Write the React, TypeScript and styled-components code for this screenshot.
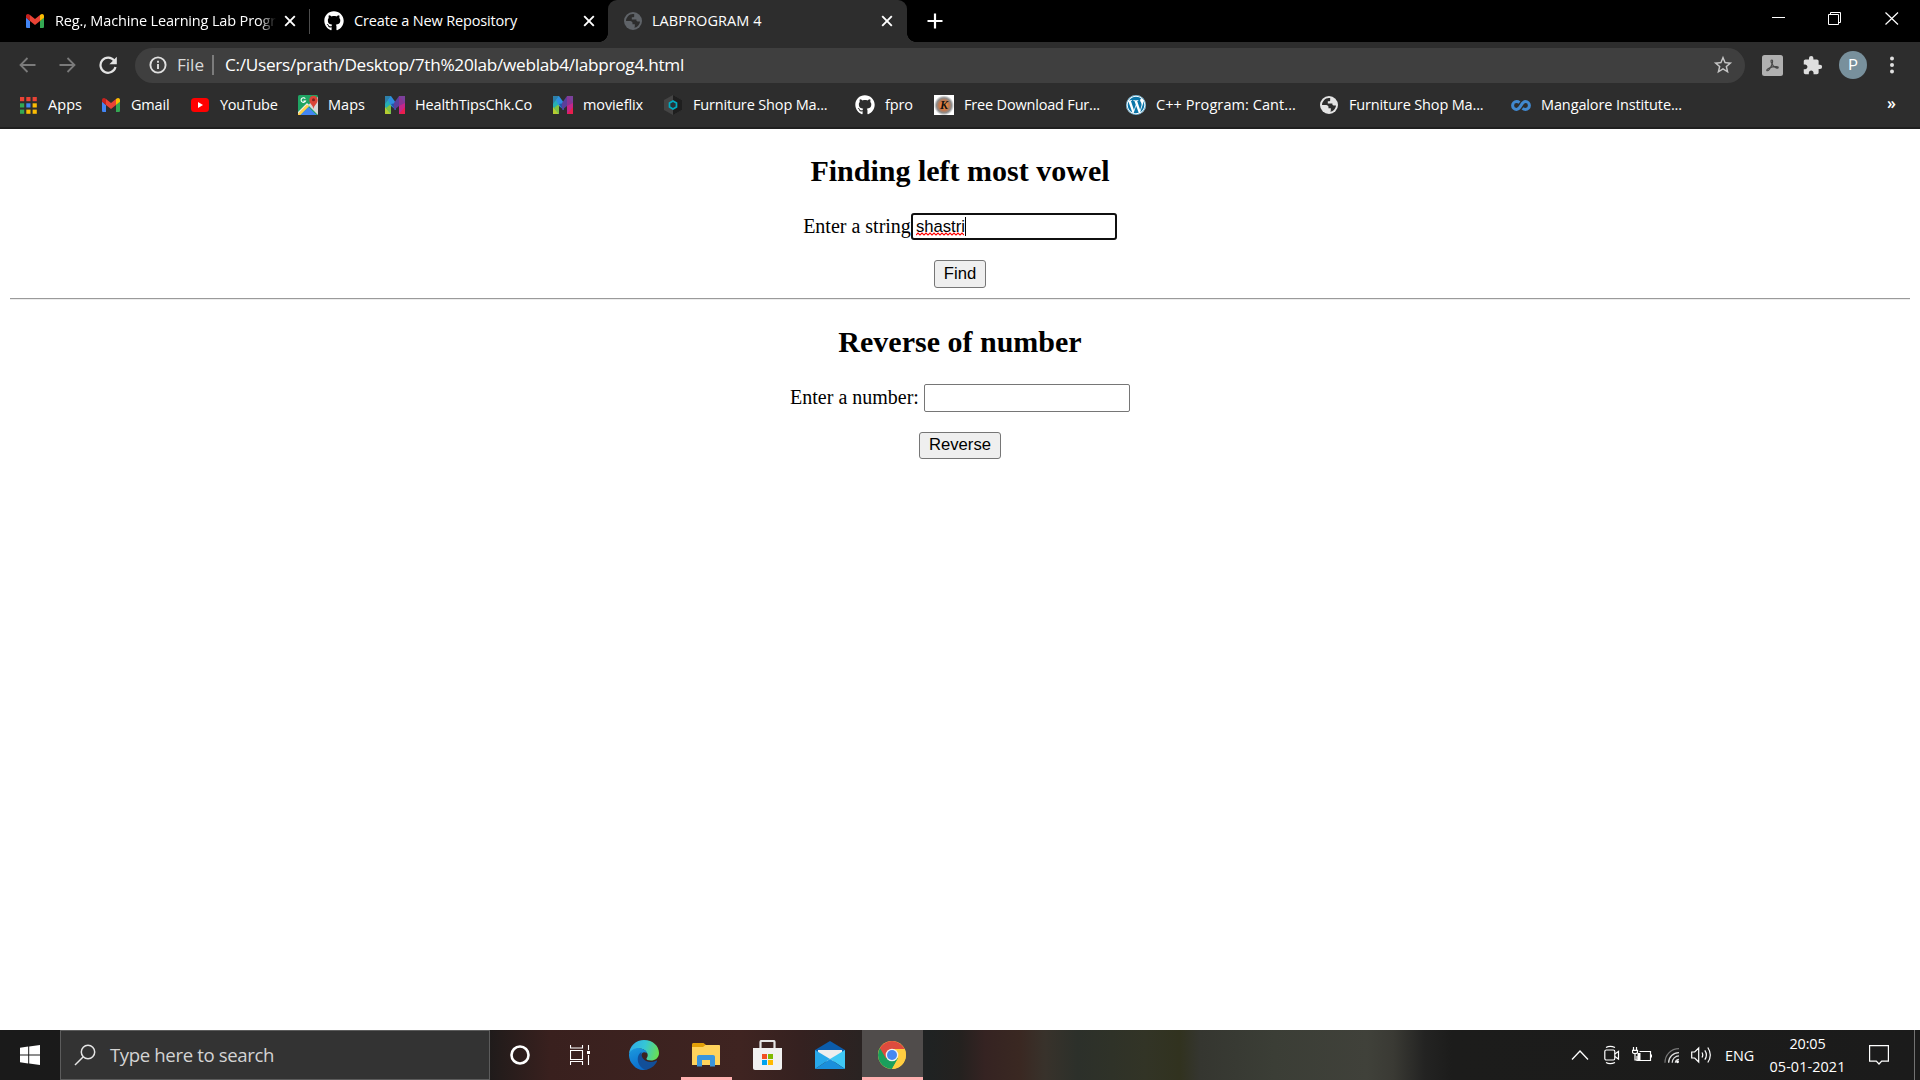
import React, { useLayoutEffect, useRef, useState } from "react";
import styled, { createGlobalStyle } from "styled-components";
import { FaGithub, FaWordpress } from "react-icons/fa";
import { MdExtension, MdStarBorder } from "react-icons/md";

const GlobalStyle = createGlobalStyle`
  * { box-sizing: border-box; }
  html, body { margin: 0; padding: 0; background: #fff; overflow: hidden; }
  svg { display: block; flex: none; }
`;

const ui = `"Segoe UI", "Open Sans", "Noto Sans", sans-serif`;

const Screen = styled.div`
  width: 1920px;
  height: 1080px;
  display: flex;
  flex-direction: column;
  overflow: hidden;
  font-family: ${ui};
`;

/* ---------- text tracked to a given width ---------- */
const FitSpan = styled.span`
  display: inline-block;
  white-space: pre;
  flex: none;
`;

function Fit({ text, width }: { text: string; width: number }) {
  const ref = useRef<HTMLSpanElement>(null);
  const [spacing, setSpacing] = useState(0);
  useLayoutEffect(() => {
    if (ref.current) {
      const natural = ref.current.getBoundingClientRect().width;
      setSpacing((width - natural) / text.length);
    }
  }, [text, width]);
  return (
    <FitSpan ref={ref} style={{ letterSpacing: `${spacing}px` }}>
      {text}
    </FitSpan>
  );
}

/* ---------- tab strip ---------- */
const TabStrip = styled.header`
  height: 42px;
  flex: none;
  display: flex;
  background: #000;
  color: #fff;
  font-size: 14.5px;
`;

const Tab = styled.div<{ $width: number; $padding: string; $active?: boolean }>`
  position: relative;
  width: ${(p) => p.$width}px;
  height: 42px;
  padding: ${(p) => p.$padding};
  display: flex;
  align-items: center;
  flex: none;
  background: ${(p) => (p.$active ? "#2d2d2d" : "transparent")};
  border-radius: 9px 9px 0 0;
  ${(p) =>
    p.$active &&
    `
    &::before, &::after {
      content: "";
      position: absolute;
      bottom: 0;
      width: 9px;
      height: 9px;
    }
    &::before { left: -9px; background: radial-gradient(circle at 0 0, transparent 8.6px, #2d2d2d 9.2px); }
    &::after { right: -9px; background: radial-gradient(circle at 100% 0, transparent 8.6px, #2d2d2d 9.2px); }
  `}
`;

const TabGap = styled.span<{ $width: number }>`
  width: ${(p) => p.$width}px;
  flex: none;
`;

const TabTitle = styled.div<{ $fade?: boolean }>`
  flex: 1;
  min-width: 0;
  overflow: hidden;
  height: 22px;
  line-height: 22px;
  margin-top: -1px;
  ${(p) =>
    p.$fade && "mask-image: linear-gradient(90deg, #000 204px, transparent 221px);"}
`;

const TabDivider = styled.div`
  width: 1px;
  height: 25px;
  margin-top: 9px;
  background: #4d4d4d;
  flex: none;
`;

const NewTab = styled.div`
  padding: 13px 0 0 20px;
`;

const WindowControls = styled.div`
  margin-left: auto;
  display: flex;
  padding: 12px 21px 0 0;
  gap: 43px;
`;

/* ---------- toolbar ---------- */
const Toolbar = styled.div`
  height: 46px;
  flex: none;
  display: flex;
  align-items: center;
  padding: 0 22px 0 19px;
  background: #2d2d2d;
`;

const NavButtons = styled.div`
  display: flex;
  align-items: center;
  gap: 22px;
  width: 116px;
`;

const Omnibox = styled.div`
  width: 1610px;
  height: 35px;
  border-radius: 18px;
  background: #3f3f3f;
  display: flex;
  align-items: center;
  padding: 0 11px 0 14px;
  font-size: 17.2px;
  color: #fff;
`;

const Scheme = styled.span`
  margin-left: 10px;
  width: 35px;
  padding-bottom: 2px;
  color: #dadada;
`;

const Address = styled.span`
  padding-bottom: 2px;
`;

const SchemeDivider = styled.span`
  width: 2px;
  height: 20px;
  background: #7c7c7c;
  margin-right: 11px;
`;

const StarHolder = styled.div`
  margin-left: auto;
  color: #c6c6c6;
`;

const ToolbarActions = styled.div`
  display: flex;
  align-items: center;
  flex: 1;
  padding-left: 17px;
`;

const Avatar = styled.div`
  width: 28px;
  height: 28px;
  margin: 0 23px 0 16px;
  border-radius: 50%;
  background: #78909c;
  color: #fff;
  font: 15px/28px Roboto, sans-serif;
  text-align: center;
`;

const ExtensionHolder = styled.div`
  margin-left: 19px;
  color: #dedede;
`;

/* ---------- bookmarks ---------- */
const BookmarkBar = styled.nav`
  height: 41px;
  flex: none;
  display: flex;
  align-items: flex-start;
  padding: 6px 24px 0 18px;
  background: #2d2d2d;
  border-bottom: 2px solid #1f1f1f;
  color: #fff;
  font-size: 14.5px;
`;

const BookmarkItem = styled.div<{ $pitch: number }>`
  width: ${(p) => p.$pitch}px;
  height: 22px;
  display: flex;
  align-items: center;
  gap: 10px;
  flex: none;
  line-height: 20px;
`;

const Favicon = styled.div`
  width: 20px;
  height: 20px;
  display: flex;
  align-items: center;
  justify-content: center;
  flex: none;
  color: #fff;
`;

const WordpressDisc = styled.div`
  border-radius: 50%;
  background: #fff;
  color: #0b75a8;
`;

const Overflow = styled.div`
  margin-left: auto;
  font-size: 16px;
  line-height: 18px;
  font-weight: 600;
`;

/* ---------- document ---------- */
const Document = styled.main`
  flex: 1;
  background: #fff;
  color: #000;
  padding: 0 10px;
  font-family: "Times New Roman", "Liberation Serif", serif;
  font-size: 20px;
`;

const Section = styled.section`
  display: flex;
  flex-direction: column;
  align-items: center;
`;

const Heading = styled.h2`
  margin: 25px 0;
  height: 34px;
  line-height: 34px;
  font-size: 30px;
  font-weight: 700;
`;

const Field = styled.label<{ $gap: number }>`
  display: flex;
  align-items: flex-start;
  height: 28px;
  line-height: 26px;
  gap: ${(p) => p.$gap}px;
`;

const TextBox = styled.div<{ $focused?: boolean }>`
  width: 206px;
  height: ${(p) => (p.$focused ? 27 : 28)}px;
  border: ${(p) => (p.$focused ? "2px solid #101010" : "1px solid #767676")};
  border-radius: ${(p) => (p.$focused ? 3 : 2)}px;
  padding: 2px 0 0 3px;
  display: flex;
  font: 16.67px/20px Arial, "Liberation Sans", sans-serif;
`;

const Misspelled = styled.span`
  position: relative;
`;

const Squiggle = styled.svg`
  position: absolute;
  left: 0;
  top: 15px;
`;

const Caret = styled.span`
  width: 1px;
  height: 19px;
  background: #000;
`;

const SubmitButton = styled.button<{ $width: number; $height: number }>`
  width: ${(p) => p.$width}px;
  height: ${(p) => p.$height}px;
  margin-top: ${(p) => 47 - p.$height}px;
  padding: 0 0 1px;
  border: 1px solid #767676;
  border-radius: 3px;
  background: #efefef;
  color: #000;
  font: 16.67px/20px Arial, "Liberation Sans", sans-serif;
`;

const Rule = styled.hr`
  margin: 10px 0 0;
  height: 2px;
  border: 0;
  border-top: 1px solid #9a9a9a;
  border-bottom: 1px solid #ededed;
`;

/* ---------- taskbar ---------- */
const Taskbar = styled.footer`
  height: 50px;
  flex: none;
  display: flex;
  color: #fff;
  background: linear-gradient(
    90deg,
    #1a1a1a 0, #1b1a1a 480px, #241c1b 500px, #39201e 550px, #3f2421 740px,
    #352120 800px, #2a2322 860px, #1f2222 930px, #24211f 960px, #352322 985px,
    #3a2822 1020px, #38322b 1045px, #2c302a 1078px, #323426 1145px, #31321f 1180px,
    #353630 1200px, #3b3e36 1274px, #40413a 1367px, #3a3a34 1393px,
    #232322 1425px, #1c1c1b 1452px, #1b1b1b 1920px
  );
`;

const StartButton = styled.div`
  width: 60px;
  padding: 15px 0 0 20px;
`;

const SearchBox = styled.div`
  width: 430px;
  height: 50px;
  border: 1px solid #5c5c5c;
  background: #333;
  display: flex;
  align-items: center;
  padding-left: 13px;
  gap: 14px;
  color: #d4d4d4;
  font-size: 18.6px;
`;

const SearchHint = styled.div`
  padding-bottom: 2px;
`;

const TaskButton = styled.div<{ $width: number; $open?: boolean; $active?: boolean }>`
  width: ${(p) => p.$width}px;
  height: 50px;
  display: flex;
  align-items: center;
  justify-content: center;
  background: ${(p) => (p.$active ? "#504c4b" : "transparent")};
  border-top: ${(p) => (p.$open ? "3px solid transparent" : "0")};
  border-bottom: ${(p) => (p.$open ? "3px solid #ffb0b0" : "0")};
  background-clip: border-box;
`;

const TaskButtons = styled.div`
  display: flex;
`;

const TaskGap = styled.div<{ $width: number }>`
  width: ${(p) => p.$width}px;
`;

const Tray = styled.div`
  margin-left: auto;
  display: flex;
  align-items: center;
  font-size: 14.4px;
`;

const TrayIcons = styled.div`
  display: flex;
  align-items: center;
  gap: 12px;
  margin-right: 13px;
`;

const Clock = styled.div`
  width: 77px;
  margin: 0 23px 0 15px;
  display: flex;
  flex-direction: column;
  align-items: center;
  line-height: 23px;
  padding-bottom: 1px;
`;

const ShowDesktop = styled.div`
  width: 6px;
  height: 50px;
  margin-left: 25px;
  border-left: 1px solid #727272;
`;

/* ---------- icons ---------- */
const CloseIcon = () => (
  <svg width="12" height="12" viewBox="0 0 12 12" stroke="#fff" strokeWidth="1.9">
    <path d="M1.2 1.2 10.8 10.8M10.8 1.2 1.2 10.8" />
  </svg>
);

const GmailIcon = () => (
  <svg width="18" height="14" viewBox="0 0 18 14">
    <path d="M0 2v10.7C0 13.4.6 14 1.3 14H4V7L0 3.5z" fill="#4285f4" />
    <path d="M14 7v7h2.7c.7 0 1.3-.6 1.3-1.3V3.2z" fill="#34a853" />
    <path d="M4 1v6l5 4 5-4V1L9 5z" fill="#ea4335" />
    <path d="M0 3.7V2C0 .2 2-.6 3.3.5L4 1v6z" fill="#c5221f" />
    <path d="M14 1v6l4-3.3V2c0-1.8-2-2.6-3.3-1.5z" fill="#fbbc04" />
  </svg>
);

const GlobeIcon = ({ color, land }: { color: string; land: string }) => (
  <svg width="18" height="18" viewBox="0 0 18 18">
    <circle cx="9" cy="9" r="9" fill={color} />
    <path
      d="M10.2 2.1C8 1.6 5.4 2.4 4 4.2 2.7 5.7 2 7.300 2 9h4.200c1.300 0 2.300 1 2.300 2.100v1.200h2.300v2.200c0 .6-.3 1-.8 1.300 3.300-.5 5.700-3.100 6-6.400h-2.400c-.8 0-1.200-.5-1.200-1.200V7.500H7.800V5.300h1.300c.7 0 1.100-.4 1.100-1.100z"
      fill={land}
    />
  </svg>
);

const AppsIcon = () => (
  <svg width="17" height="17" viewBox="0 0 17 17">
    {["#ea4335", "#ea4335", "#ea4335", "#34a853", "#4285f4", "#fbbc04", "#34a853", "#fbbc04", "#fbbc04"].map(
      (c, i) => (
        <rect key={i} x={(i % 3) * 6.3} y={Math.floor(i / 3) * 6.3} width="4.2" height="4.2" fill={c} />
      )
    )}
  </svg>
);

const YouTubeIcon = () => (
  <svg width="18" height="14" viewBox="0 0 18 14">
    <rect width="18" height="14" rx="3.5" fill="#f00" />
    <path d="M7 4v6l5-3z" fill="#fff" />
  </svg>
);

const MapsIcon = () => (
  <svg width="20" height="20" viewBox="0 0 20 20">
    <rect width="20" height="20" rx="1.5" fill="#1fa463" />
    <path d="M20 2v18L10 10z" fill="#d8d8d8" />
    <path d="m0 17 9-9 2 2-9.500 9.500H0z" fill="#eee" />
    <path d="m0 18.500 9-9 2 2L2.500 20H0z" fill="#ffd04b" />
    <path d="M2.500 20l8-8 8 8z" fill="#4285f4" />
    <path d="M15.500 14c-.3-3.500-4.200-5.400-4.200-9a4.200 4.200 0 0 1 8.400 0c0 3.600-3.900 5.500-4.200 9z" fill="#db4437" />
    <circle cx="15.500" cy="4.800" r="1.500" fill="#7b231e" />
    <path d="M7.300 3.700A2.300 2.300 0 1 0 7.500 6H5.400" fill="none" stroke="#fff" strokeWidth="1.100" />
  </svg>
);

const MobiriseIcon = () => (
  <svg width="20" height="18" viewBox="0 0 20 18">
    <path d="M0 0h6v18H0z" fill="#26aeb5" />
    <path d="M0 0h6L0 8z" fill="#2d7fa8" />
    <path d="M0 11 6 18H0z" fill="#b5cc30" />
    <path d="M6 8v10L1 12z" fill="#7fc241" />
    <path d="M6 0 11 7v7L6 10 3 4z" fill="#2e8ee0" />
    <path d="M6 8 10 14l1-7z" fill="#2456a8" />
    <path d="M14 0 9 7v7l5-4z" fill="#59409b" />
    <path d="M14 0h6v18h-6z" fill="#8b3494" />
    <path d="m14 0 6 7V0z" fill="#7b419b" />
    <path d="m14 10 6-3v11h-6z" fill="#c4268b" />
    <path d="m14 18 6-7v7z" fill="#e91e4e" />
  </svg>
);

const HexIcon = () => (
  <svg width="18" height="20" viewBox="0 0 18 20">
    <path d="m9 0 9 5v10l-9 5-9-5V5z" fill="#444" />
    <path d="m9 0 9 5v10l-9 5z" fill="#1f1f1f" />
    <path d="m9 6 3.500 2v4L9 14l-3.500-2V8z" fill="#263238" stroke="#00acc1" strokeWidth="1.700" />
  </svg>
);

const KBadge = styled.div`
  width: 20px;
  height: 20px;
  display: flex;
  align-items: center;
  justify-content: center;
  background: radial-gradient(circle at 50% 52%, #e8843f 0 3px, #c0764c 5px, #8b8b8b 7.5px, #d0d0d0 9px, #fff 10px);
  color: #111;
  font: italic 700 12px/20px "Liberation Serif", serif;
`;

const InfinityIcon = () => (
  <svg width="20" height="11" viewBox="0 0 20 11" fill="none" stroke="#4189d0" strokeWidth="3">
    <path d="M8.500 2.600C7.500 1.800 6.600 1.600 5.500 1.600a3.900 3.900 0 0 0 0 7.800c4.500 0 4.500-7.800 9-7.800a3.900 3.900 0 0 1 0 7.800c-1.100 0-2-.2-3-1" />
  </svg>
);

const ChromeIcon = () => (
  <svg width="29" height="28" viewBox="0 0 29 28">
    <circle cx="14" cy="14" r="14" fill="#ffcd40" />
    <path d="M1.900 7A14 14 0 0 0 14 28l6-10.500-6-3.500z" fill="#1a9f5c" />
    <path d="M14 8h12.600A14 14 0 0 1 14 28l6-10.500z" fill="#ffcd40" />
    <path d="M1.900 7 8 17.500 14 14V8h12.600L26.100 7A14 14 0 0 0 1.900 7z" fill="#dd4b3e" />
    <circle cx="14" cy="14" r="6.300" fill="#f1f1f1" />
    <circle cx="14" cy="14" r="5" fill="#4688f1" />
  </svg>
);

const EdgeIcon = () => (
  <svg width="30" height="30" viewBox="0 0 30 30">
    <defs>
      <linearGradient id="edgeTop" x1="0" y1="0.300" x2="1" y2="0.500">
        <stop offset="0" stopColor="#2fabe8" />
        <stop offset=".5" stopColor="#35c6d6" />
        <stop offset="1" stopColor="#68de55" />
      </linearGradient>
      <linearGradient id="edgeLeft" x1="0" y1="0" x2="0.400" y2="1">
        <stop offset="0" stopColor="#1c9ade" />
        <stop offset="1" stopColor="#0b6dcc" />
      </linearGradient>
    </defs>
    <path d="M0 14C.5 6 7 0 15 0c9 0 15 6 15 13 0 5-4 7.500-8 7.500-3 0-5-1-4.500-2.300 1.600-1.700 1.500-4 .5-5.500C14 6 4 8 0 14z" fill="url(#edgeTop)" />
    <path d="M0 14C2 9.500 7 7.500 11 8.200c3.800.7 6.400 2.600 7 5-3-2.200-6-1-6 3.500 0 6 5 11 10.500 9.800C17 31.500 9 31 4.500 25.500A15 15 0 0 1 0 14z" fill="url(#edgeLeft)" />
    <path d="M12.500 12C7 15 7 26 16.500 29.900 21.500 29 25.800 26 28 21.500c.3-.8-.3-1.200-1-.8C20 24 11.500 20.500 12.500 12z" fill="#124f99" />
  </svg>
);

const ExplorerIcon = () => (
  <svg width="29" height="24" viewBox="0 0 29 24">
    <path d="M0 1.500C0 .6.6 0 1.500 0h10l2.500 2v5H0z" fill="#e3a008" />
    <path d="M0 4h11l2.500-2H27c.6 0 1 .4 1 1v19H0z" fill="#ffd35c" />
    <path d="M5 23.500V14c0-1.200.8-2 2-2h14c1.200 0 2 .8 2 2v9.500h-5V17H10v6.500z" fill="#3a95dc" />
  </svg>
);

const StoreIcon = () => (
  <svg width="29" height="30" viewBox="0 0 29 30">
    <path d="M7.500 10V2c0-.6.4-1 1-1h12c.6 0 1 .4 1 1v8" fill="none" stroke="#e5e5e5" strokeWidth="2.200" />
    <path d="M0 8h29v20c0 1.100-.9 2-2 2H2c-1.100 0-2-.9-2-2z" fill="#f1f1f1" />
    <path d="M9 14h5v5H9z" fill="#f25022" />
    <path d="M15 14h5v5h-5z" fill="#7fba00" />
    <path d="M9 20h5v5H9z" fill="#00a4ef" />
    <path d="M15 20h5v5h-5z" fill="#ffb900" />
  </svg>
);

const MailIcon = () => (
  <svg width="30" height="28" viewBox="0 0 30 28">
    <path d="M0 9 15 0l15 9v4H0z" fill="#0b5cab" />
    <path d="M3 9h24v8L15 22 3 17z" fill="#eee" />
    <path d="M30 9v19L15 18z" fill="#3fc8f5" />
    <path d="M0 28h30L15 18z" fill="#1a8fdc" />
    <path d="M0 9v19L15 18z" fill="#28a8ea" />
  </svg>
);

const bookmarks = [
  { icon: <AppsIcon />, text: "Apps", width: 34, pitch: 83 },
  { icon: <GmailIcon />, text: "Gmail", width: 38.5, pitch: 89 },
  { icon: <YouTubeIcon />, text: "YouTube", width: 57.5, pitch: 108 },
  { icon: <MapsIcon />, text: "Maps", width: 37, pitch: 87 },
  { icon: <MobiriseIcon />, text: "HealthTipsChk.Co", width: 117, pitch: 168 },
  { icon: <MobiriseIcon />, text: "movieflix", width: 60, pitch: 110 },
  { icon: <HexIcon />, text: "Furniture Shop Ma...", width: 134.5, pitch: 192 },
  { icon: <FaGithub size={20} />, text: "fpro", width: 28, pitch: 79 },
  { icon: <KBadge>K</KBadge>, text: "Free Download Fur...", width: 136, pitch: 192 },
  {
    icon: (
      <WordpressDisc>
        <FaWordpress size={20} />
      </WordpressDisc>
    ),
    text: "C++ Program: Cant...",
    width: 140,
    pitch: 193,
  },
  { icon: <GlobeIcon color="#e4e4e4" land="#2d2d2d" />, text: "Furniture Shop Ma...", width: 134.5, pitch: 192 },
  { icon: <InfinityIcon />, text: "Mangalore Institute...", width: 141, pitch: 190 },
];

export default function App() {
  return (
    <Screen>
      <GlobalStyle />
      <TabStrip>
        <Tab $width={309} $padding="0 13px 0 26px">
          <GmailIcon />
          <TabGap $width={11} />
          <TabTitle $fade>
            <Fit text="Reg., Machine Learning Lab Progr" width={221} />
          </TabTitle>
          <CloseIcon />
        </Tab>
        <TabDivider />
        <Tab $width={298} $padding="0 13px 0 14px">
          <FaGithub size={20} />
          <TabGap $width={10} />
          <TabTitle>
            <Fit text="Create a New Repository" width={163} />
          </TabTitle>
          <CloseIcon />
        </Tab>
        <Tab $width={299} $padding="0 14px 0 16px" $active>
          <GlobeIcon color="#5f6368" land="#2d2d2d" />
          <TabGap $width={10} />
          <TabTitle>
            <Fit text="LABPROGRAM 4" width={109.5} />
          </TabTitle>
          <CloseIcon />
        </Tab>
        <NewTab>
          <svg width="16" height="16" viewBox="0 0 16 16" stroke="#fff" strokeWidth="2.2">
            <path d="M8 .5v15M.5 8h15" />
          </svg>
        </NewTab>
        <WindowControls>
          <svg width="13" height="13" viewBox="0 0 13 13" stroke="#fff">
            <path d="M0 5.500h13" />
          </svg>
          <svg width="14" height="13" viewBox="0 0 14 13" stroke="#fff" fill="none">
            <path d="M.5 2.500h10v10H.5zM2.500 2.500v-2h10v10h-2" />
          </svg>
          <svg width="14" height="13" viewBox="0 0 14 13" stroke="#fff" strokeWidth="1.200">
            <path d="M.5.5 13 12.500M13 .5.5 12.500" />
          </svg>
        </WindowControls>
      </TabStrip>

      <Toolbar>
        <NavButtons>
          <svg width="18" height="18" viewBox="0 0 18 18" fill="none" stroke="#7b7b7b" strokeWidth="1.800">
            <path d="M16.500 9H2M8.500 2 1.500 9l7 7" />
          </svg>
          <svg width="18" height="18" viewBox="0 0 18 18" fill="none" stroke="#7b7b7b" strokeWidth="1.800">
            <path d="M.5 9H15M8.500 2l7 7-7 7" />
          </svg>
          <svg width="18" height="18" viewBox="0 0 18 18">
            <path d="M15.200 4.600A7.600 7.600 0 1 0 16.500 11" fill="none" stroke="#e2e2e2" strokeWidth="2.200" />
            <path d="M17.800.8v7.400h-7.400z" fill="#e2e2e2" />
          </svg>
        </NavButtons>
        <Omnibox>
          <svg width="18" height="18" viewBox="0 0 18 18" fill="none" stroke="#e0e0e0" strokeWidth="1.900">
            <circle cx="9" cy="9" r="7.600" />
            <path d="M9 8v5M9 4.800v2" />
          </svg>
          <Scheme>
            <Fit text="File" width={27} />
          </Scheme>
          <SchemeDivider />
          <Address>
            <Fit text="C:/Users/prath/Desktop/7th%20lab/weblab4/labprog4.html" width={459} />
          </Address>
          <StarHolder>
            <MdStarBorder size={22} />
          </StarHolder>
        </Omnibox>
        <ToolbarActions>
          <svg width="21" height="21" viewBox="0 0 21 21" fill="none">
            <rect width="21" height="21" rx="2.500" fill="#b0b0b0" />
            <path
              d="M9.300 5.200c1.800-1 1.500 2.600.2 5.200-1.200 2.700-3.200 5.800-4.500 5.300-1.200-.8 2.300-3.100 5.500-3.800 2.700-.6 5.800-.5 5.700.6-.3 1.300-3.300.2-5-1.900C9.700 8.600 8.700 5.900 9.300 5.200z"
              stroke="#4a4a4a"
              strokeWidth="1.200"
            />
          </svg>
          <ExtensionHolder>
            <MdExtension size={21} />
          </ExtensionHolder>
          <Avatar>P</Avatar>
          <svg width="4" height="18" viewBox="0 0 4 18" fill="#e0e0e0">
            <circle cx="2" cy="2.500" r="2" />
            <circle cx="2" cy="9" r="2" />
            <circle cx="2" cy="15.500" r="2" />
          </svg>
        </ToolbarActions>
      </Toolbar>

      <BookmarkBar>
        {bookmarks.map((b, i) => (
          <BookmarkItem key={i} $pitch={b.pitch}>
            <Favicon>{b.icon}</Favicon>
            <Fit text={b.text} width={b.width} />
          </BookmarkItem>
        ))}
        <Overflow>»</Overflow>
      </BookmarkBar>

      <Document>
        <Section>
          <Heading>Finding left most vowel</Heading>
          <Field $gap={0}>
            Enter a string
            <TextBox $focused>
              <Misspelled>
                shastri
                <Squiggle width="48" height="4" viewBox="0 0 48 4" fill="none" stroke="#f00" strokeWidth="1.100">
                  <path d={"M0 3" + "l2-2l2 2".repeat(12)} />
                </Squiggle>
              </Misspelled>
              <Caret />
            </TextBox>
          </Field>
          <SubmitButton $width={52} $height={28}>
            Find
          </SubmitButton>
        </Section>
        <Rule />
        <Section>
          <Heading>Reverse of number</Heading>
          <Field $gap={5}>
            Enter a number:
            <TextBox />
          </Field>
          <SubmitButton $width={82} $height={27}>
            Reverse
          </SubmitButton>
        </Section>
      </Document>

      <Taskbar>
        <StartButton>
          <svg width="20" height="20" viewBox="0 0 20 20" fill="#fff">
            <path d="M0 2.800 8.200 1.600V9.500H0zM9.200 1.500 20 0v9.500H9.200zM0 10.500h8.200v7.900L0 17.300zM9.200 10.500H20V20L9.200 18.500z" />
          </svg>
        </StartButton>
        <SearchBox>
          <svg width="22" height="22" viewBox="0 0 22 22" fill="none" stroke="#e6e6e6" strokeWidth="1.500">
            <circle cx="14" cy="8" r="6.700" />
            <path d="M9.300 12.700 1 21" />
          </svg>
          <SearchHint>
            <Fit text="Type here to search" width={164} />
          </SearchHint>
        </SearchBox>
        <TaskButtons>
          <TaskButton $width={60}>
            <svg width="20" height="20" viewBox="0 0 20 20" fill="none" stroke="#fff" strokeWidth="2.600">
              <circle cx="10" cy="10" r="8.500" />
            </svg>
          </TaskButton>
          <TaskButton $width={60}>
            <svg width="20" height="20" viewBox="0 0 20 20" fill="none" stroke="#fff" strokeWidth="1.100">
              <path d="M.5 5.500h12v9H.5zM.5 0v3h12V0M.5 20v-3.500h12V20M18.500 0v5M18.500 10v10" />
              <path d="M17 6h3v3h-3z" fill="#fff" stroke="none" />
            </svg>
          </TaskButton>
          <TaskButton $width={68}>
            <EdgeIcon />
          </TaskButton>
          <TaskGap $width={3} />
          <TaskButton $width={51} $open>
            <ExplorerIcon />
          </TaskButton>
          <TaskGap $width={5} />
          <TaskButton $width={61}>
            <StoreIcon />
          </TaskButton>
          <TaskButton $width={64}>
            <MailIcon />
          </TaskButton>
          <TaskButton $width={61} $open $active>
            <ChromeIcon />
          </TaskButton>
        </TaskButtons>
        <Tray>
          <TrayIcons>
            <svg width="21" height="12" viewBox="0 0 21 12" fill="none" stroke="#fff" strokeWidth="1.300">
              <path d="M1 10.500 9 2l8 8.500" />
            </svg>
            <svg width="16" height="20" viewBox="0 0 16 20" fill="none" stroke="#fff" strokeWidth="1.200">
              <rect x=".8" y="5" width="10" height="10" rx="1.500" />
              <path d="M10.800 9 14.500 6.500v7.500L10.800 11.500M2 2.500Q6 .2 11 2.500M2 17.500q4 2.300 9 0" />
            </svg>
            <svg width="20" height="16" viewBox="0 0 20 16" fill="none" stroke="#fff" strokeWidth="1.200">
              <path d="M7.500 4.500h11v9H5V9M19.500 7.500v3M1.500 0v3M4.500 0v3M.5 3.300h5v2c0 1.800-5 1.800-5 0zM3 7v6h2" />
              <path d="M5.500 6H8.500v7h-3z" fill="#fff" stroke="none" />
            </svg>
            <svg width="15" height="17" viewBox="0 0 15.500 17" fill="none" strokeWidth="1.300">
              <path d="M1 16C1 8 7 1.500 15.500 1.500" stroke="#777" />
              <path d="M4.800 16c0-6 4.700-10.500 10.700-10.500M8.500 16c0-4 3-7 7-7M11.700 16c0-2 1.800-3.500 3.800-3.500" stroke="#ddd" />
              <circle cx="14" cy="15" r="1.500" fill="#fff" />
            </svg>
            <svg width="21" height="18" viewBox="0 0 21 18" fill="none" stroke="#fff" strokeWidth="1.200">
              <path d="M.7 6h3l4-4v14l-4-4h-3zM11 6.500q1.500 2.500 0 5M13.800 4.300q3.200 4.700 0 9.400M16.800 1.500q5 7.500 0 15" />
            </svg>
          </TrayIcons>
          <Fit text="ENG" width={29} />
          <Clock>
            <Fit text="20:05" width={36} />
            <Fit text="05-01-2021" width={76} />
          </Clock>
          <svg width="20" height="20" viewBox="0 0 20 20" fill="none" stroke="#fff" strokeWidth="1.200">
            <path d="M.6.6h18.800v15.500H12.700L10 19 7.300 16.100H.6z" />
          </svg>
          <ShowDesktop />
        </Tray>
      </Taskbar>
    </Screen>
  );
}
